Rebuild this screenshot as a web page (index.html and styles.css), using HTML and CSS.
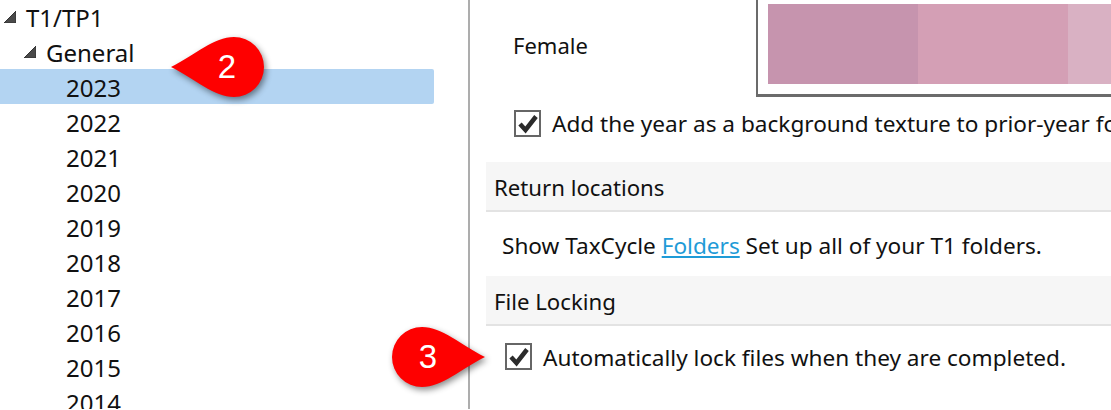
FILE: index.html
```html
<!DOCTYPE html>
<html lang="en">
<head>
  <meta charset="UTF-8" />
  <title>TaxCycle options</title>
  <link rel="stylesheet" href="styles.css">
</head>
<body>

  <aside class="tree">
    <div class="row lvl0"><svg class="arrow" viewBox="0 0 12 12"><path d="M12 0V12H0Z"/></svg>T1/TP1</div>
    <div class="row lvl1"><svg class="arrow" viewBox="0 0 12 12"><path d="M12 0V12H0Z"/></svg>General</div>
    <div class="row lvl2 selected">2023</div>
    <div class="row lvl2">2022</div>
    <div class="row lvl2">2021</div>
    <div class="row lvl2">2020</div>
    <div class="row lvl2">2019</div>
    <div class="row lvl2">2018</div>
    <div class="row lvl2">2017</div>
    <div class="row lvl2">2016</div>
    <div class="row lvl2">2015</div>
    <div class="row lvl2">2014</div>
  </aside>

  <main class="options">
    <div class="female">
      <span class="female-label">Female</span>
      <div class="swatch-frame">
        <div class="swatch s1"></div>
        <div class="swatch s2"></div>
        <div class="swatch s3"></div>
      </div>
    </div>

    <label class="check check-year">
      <svg class="box" viewBox="0 0 27 27"><rect x="1" y="1" width="25" height="25" fill="#fff" stroke="#666" stroke-width="2"/><path d="M6 14l5.5 6L22 6.500" fill="none" stroke="#2b2b2b" stroke-width="4.500"/></svg>
      <span class="nowrap">Add the year as a background texture to prior-year forms</span>
    </label>

    <h3 class="band band-return">Return locations</h3>
    <p class="folders">Show TaxCycle <a href="#">Folders</a> Set up all of your T1 folders.</p>

    <h3 class="band">File Locking</h3>
    <label class="check check-lock">
      <svg class="box" viewBox="0 0 27 27"><rect x="1" y="1" width="25" height="25" fill="#fff" stroke="#666" stroke-width="2"/><path d="M6 14l5.5 6L22 6.500" fill="none" stroke="#2b2b2b" stroke-width="4.500"/></svg>
      <span class="nowrap">Automatically lock files when they are completed.</span>
    </label>
  </main>

  <!-- red callouts sit over the content -->
  <div class="callout callout-2">
    <svg viewBox="0 0 94 62"><path d="M1 31C25 19 44 1 64 1A30 30 0 0 1 64 61C44 61 25 43 1 31Z"/></svg>
    <span>2</span>
  </div>
  <div class="callout callout-3">
    <svg viewBox="0 0 94 62"><path d="M93 31C69 19 50 1 30 1A30 30 0 0 0 30 61C50 61 69 43 93 31Z"/></svg>
    <span>3</span>
  </div>

</body>
</html>
```

FILE: styles.css
```css
* { margin:0; padding:0; box-sizing:border-box; }
html, body { height:410px; overflow:hidden; }
body { display:flex; background:#fff; color:#111; font-family:"Noto Sans", "Open Sans", sans-serif; font-size:22.6px; position:relative; }

.tree { width:470px; flex:none; height:410px; border-right:2px solid #adadad; margin-top:-1px; padding-right:34px; overflow:hidden; font-size:24px; }
.row { height:35px; line-height:38px; display:flex; align-items:flex-start; white-space:nowrap; }
.lvl0 { padding-left:4px; }
.lvl1 { padding-left:24px; }
.lvl2 { padding-left:66px; }
.selected { background:#b3d4f2; border-radius:0 2px 2px 0; }
.arrow { width:12px; height:12px; margin:12px 10px 0 0; fill:#4a4a4a; stroke:#333; stroke-width:1; }

.options { flex:1; min-width:0; padding-left:16px; }
.female { height:97px; display:flex; }
.female-label { width:270px; padding:29px 0 0 27px; line-height:32px; font-size:22px; }
.swatch-frame { flex:1; display:flex; height:97px; padding:4px 0 10px 10px; border:solid #6b6b6b; border-width:0 0 3px 2px; overflow:hidden; }
.swatch { width:150px; height:80px; flex:none; }
.s1 { background:#c694ae; }
.s2 { background:#d49fb5; }
.s3 { background:#d9b1c3; width:60px; }

.check { display:flex; align-items:flex-start; gap:11px; white-space:nowrap; line-height:27px; }
.box { width:27px; height:27px; flex:none; }
.check-year { padding:13px 0 0 28px; height:65px; }
.check-lock { padding:17px 0 0 19px; }
.check-lock span { margin-top:1px; }

.band { background:#f6f6f6; border-bottom:2px solid #e3e3e3; height:50px; line-height:52px; padding-left:8px; font-weight:400; font-size:22.2px; }
.folders { height:64px; padding-left:16px; line-height:68px; white-space:nowrap; }
.folders a { color:#1f9bd7; text-decoration:underline; }

.callout { position:absolute; width:94px; height:62px; display:flex; align-items:center; justify-content:center; color:#fff; font-family:"Liberation Sans", sans-serif; font-size:33px; }
.callout svg { position:absolute; inset:0; fill:#fe0000; filter:drop-shadow(2px 3px 3px rgba(0,0,0,.45)); overflow:visible; }
.callout span { position:relative; }
.callout-2 { left:170px; top:36px; padding-left:20px; }
.callout-3 { left:392px; top:326px; padding-right:22px; }
```
